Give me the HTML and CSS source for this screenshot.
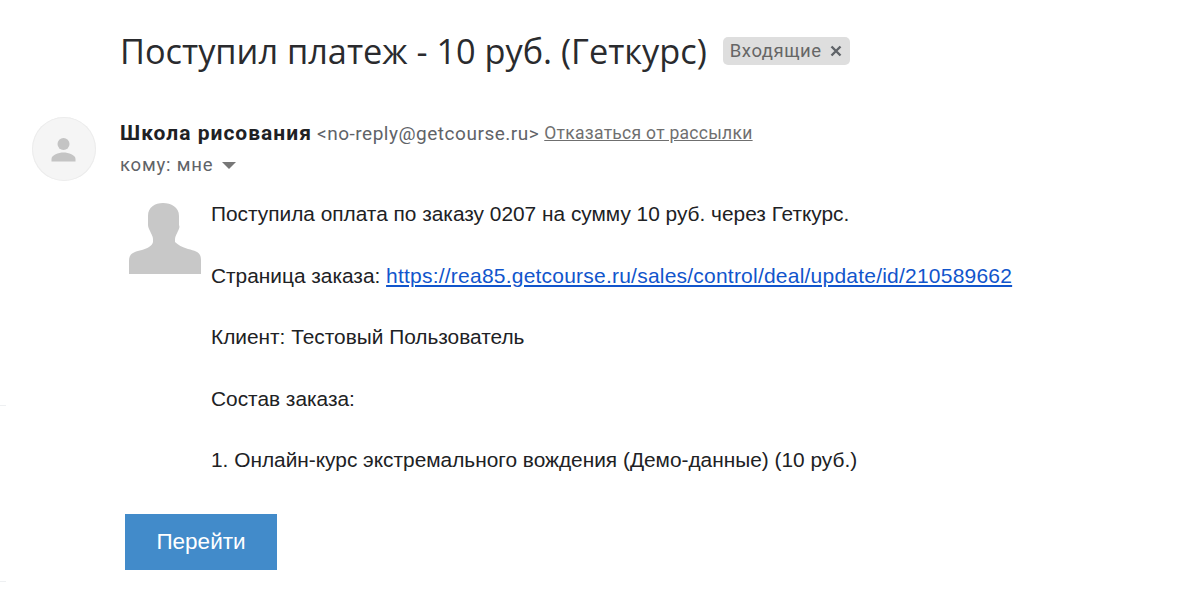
FILE: index.html
```html
<!DOCTYPE html>
<html lang="ru">
<head>
<meta charset="utf-8">
<title>Поступил платеж</title>
<link rel="stylesheet" href="styles.css">
</head>
<body>
<span class="edge-mark edge-mark-top"></span>
<span class="edge-mark edge-mark-bottom"></span>
<main class="mail">
  <header class="subject">
    <h1 class="subject-title">Поступил платеж - 10 руб. (Геткурс)</h1>
    <span class="label">Входящие <svg class="label-x" viewBox="0 0 12 12" width="12" height="12"><path d="M1.500 1.500L10.500 10.500M10.500 1.500L1.500 10.500" stroke="#5f6368" stroke-width="2.400" fill="none"/></svg></span>
  </header>
  <section class="sender">
    <div class="avatar">
      <svg viewBox="0 0 64 64" width="64" height="64">
        <circle cx="31.500" cy="27" r="6" fill="#c4c4c4"/>
        <path d="M19.500 44.500v-2.500c0-4 7-6.500 12-6.500s12 2.500 12 6.500v2.500z" fill="#c4c4c4"/>
      </svg>
    </div>
    <div class="sender-info">
      <div class="sender-line"><strong class="sender-name">Школа рисования</strong> <span class="sender-mail">&lt;no-reply@getcourse.ru&gt;</span> <a class="unsubscribe" href="#">Отказаться от рассылки</a></div>
      <div class="recipient">кому: мне <svg class="caret" viewBox="0 0 14 7" width="14" height="7"><path d="M0 0h14L7 7z" fill="#777"/></svg></div>
    </div>
  </section>
  <section class="body">
    <svg class="silhouette" viewBox="0 0 74 71" width="74" height="71">
      <path d="M20 13C20 4 27 0 35 0s16 4 16 13v9c1 2 0 4-1 6-1 3-3 5-3 8v3c3 3 7 5 13 7 8 2 13 3 13 11v15H1V58c0-8 5-9 13-11 6-2 10-4 11-8v-3c0-3-2-5-3-8-1-2-2-4-2-6z" fill="#c8c8c8"/>
    </svg>
    <div class="message">
      <p>Поступила оплата по заказу 0207 на сумму 10 руб. через Геткурс.</p>
      <p>Страница заказа: <a class="order-link" href="#">https://rea85.getcourse.ru/sales/control/deal/update/id/210589662</a></p>
      <p>Клиент: Тестовый Пользователь</p>
      <p>Состав заказа:</p>
      <p>1. Онлайн-курс экстремального вождения (Демо-данные) (10 руб.)</p>
    </div>
  </section>
  <a class="go-button" href="#">Перейти</a>
</main>
</body>
</html>
```

FILE: styles.css
```css
* { box-sizing: border-box; }
html, body { margin: 0; height: 100%; background: #fff; overflow: hidden; }
body { position: relative; font-family: Roboto, "Noto Sans", sans-serif; color: #222; }
.mail { display: flex; flex-direction: column; align-items: flex-start; padding: 28px 0 0 32px; }
.subject { display: flex; align-items: center; margin-left: 88px; height: 46px; }
.subject-title { margin: 0; font-family: "Open Sans", Roboto, sans-serif; font-weight: 400; font-size: 34.300px; line-height: 46px; color: #2a2b2e; white-space: nowrap; }
.label { display: flex; align-items: center; gap: 8px; margin-left: 16px; height: 28px; padding: 0 8px 0 7px; background: #dedede; border-radius: 5px; font-size: 18.500px; letter-spacing: .55px; color: #666; white-space: nowrap; }
.label-x { display: block; }
.sender { display: flex; margin-top: 43px; }
.avatar { width: 64px; height: 64px; border-radius: 50%; background: #f5f5f5; box-shadow: inset 0 0 0 1px #ececec; }
.avatar svg { display: block; }
.sender-info { margin-left: 24px; }
.sender-line { height: 32px; display: flex; align-items: center; gap: 5px; white-space: nowrap; }
.sender-name { font-size: 21px; font-weight: 700; letter-spacing: 1.020px; color: #202124; }
.sender-mail { font-size: 19px; letter-spacing: .52px; color: #5f6368; }
.unsubscribe { font-size: 17.500px; letter-spacing: .28px; color: #6f6f6f; text-decoration: underline; }
.recipient { display: flex; align-items: center; height: 32px; gap: 9px; font-size: 18.500px; letter-spacing: .8px; color: #5f6368; }
.body { display: flex; align-items: flex-start; margin-top: 22px; margin-left: 96px; }
.silhouette { display: block; flex: none; }
.message { margin-left: 9px; margin-top: -2px; font-family: "Liberation Sans", Arial, sans-serif; font-size: 20.850px; line-height: 26px; color: #202124; }
.message p { margin: 0 0 35.500px; white-space: nowrap; }
.message p:last-child { margin-bottom: 0; }
.order-link { color: #1155cc; font-size: 21px; letter-spacing: .22px; text-decoration: underline; }
.go-button { display: flex; align-items: center; justify-content: center; width: 152px; height: 56px; margin-top: 41px; margin-left: 93px; background: #428bca; color: #fff; font-family: "Liberation Sans", Arial, sans-serif; font-size: 22.500px; text-decoration: none; }
.edge-mark { position: absolute; left: 0; width: 6px; height: 1px; background: #eef0f2; }
.edge-mark-top { top: 405px; }
.edge-mark-bottom { top: 581px; }
```
